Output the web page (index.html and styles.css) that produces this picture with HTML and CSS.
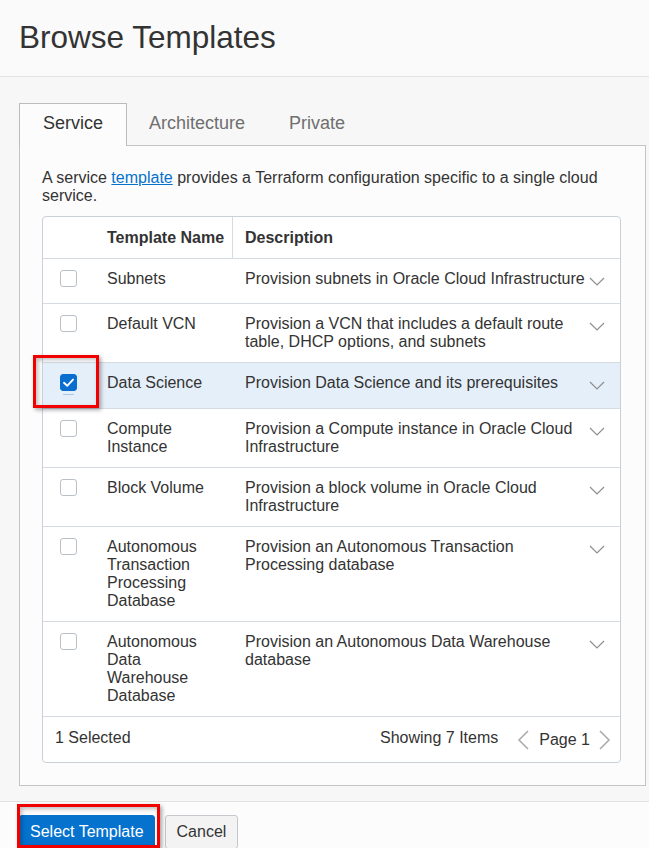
FILE: index.html
```html
<!DOCTYPE html>
<html lang="en">
<head>
<meta charset="utf-8">
<title>Browse Templates</title>
<link rel="stylesheet" href="styles.css">
</head>
<body>
<header class="page-header">
  <h1 class="title">Browse Templates</h1>
</header>
<main class="content">
  <div class="tabs">
    <div class="tab tab-active">Service</div>
    <div class="tab">Architecture</div>
    <div class="tab">Private</div>
  </div>
  <section class="panel">
    <p class="intro">A service <a href="#" class="link">template</a> provides a Terraform configuration specific to a single cloud service.</p>
    <div class="table">
      <div class="row row-head">
        <div class="cell"></div>
        <div class="cell th th-name">Template Name</div>
        <div class="cell th th-desc">Description</div>
        <div class="cell"></div>
      </div>

      <div class="row">
        <div class="cell cell-check"><span class="checkbox"></span></div>
        <div class="cell cell-name">Subnets</div>
        <div class="cell cell-desc">Provision subnets in Oracle Cloud Infrastructure</div>
        <div class="cell cell-chev"><svg class="chev" width="16" height="9" viewBox="0 0 16 9"><polyline points="1,1 8,8 15,1" /></svg></div>
      </div>

      <div class="row">
        <div class="cell cell-check"><span class="checkbox"></span></div>
        <div class="cell cell-name">Default VCN</div>
        <div class="cell cell-desc">Provision a VCN that includes a default route table, DHCP options, and subnets</div>
        <div class="cell cell-chev"><svg class="chev" width="16" height="9" viewBox="0 0 16 9"><polyline points="1,1 8,8 15,1" /></svg></div>
      </div>

      <div class="row row-selected">
        <div class="cell cell-check"><span class="checkbox checkbox-checked"><svg width="17" height="17" viewBox="0 0 17 17"><polyline points="4,8.8 7.2,11.8 13,5.6" /></svg></span></div>
        <div class="cell cell-name">Data Science</div>
        <div class="cell cell-desc">Provision Data Science and its prerequisites</div>
        <div class="cell cell-chev"><svg class="chev" width="16" height="9" viewBox="0 0 16 9"><polyline points="1,1 8,8 15,1" /></svg></div>
      </div>

      <div class="row">
        <div class="cell cell-check"><span class="checkbox"></span></div>
        <div class="cell cell-name">Compute Instance</div>
        <div class="cell cell-desc">Provision a Compute instance in Oracle Cloud Infrastructure</div>
        <div class="cell cell-chev"><svg class="chev" width="16" height="9" viewBox="0 0 16 9"><polyline points="1,1 8,8 15,1" /></svg></div>
      </div>

      <div class="row">
        <div class="cell cell-check"><span class="checkbox"></span></div>
        <div class="cell cell-name">Block Volume</div>
        <div class="cell cell-desc">Provision a block volume in Oracle Cloud Infrastructure</div>
        <div class="cell cell-chev"><svg class="chev" width="16" height="9" viewBox="0 0 16 9"><polyline points="1,1 8,8 15,1" /></svg></div>
      </div>

      <div class="row">
        <div class="cell cell-check"><span class="checkbox"></span></div>
        <div class="cell cell-name">Autonomous Transaction Processing Database</div>
        <div class="cell cell-desc">Provision an Autonomous Transaction Processing database</div>
        <div class="cell cell-chev"><svg class="chev" width="16" height="9" viewBox="0 0 16 9"><polyline points="1,1 8,8 15,1" /></svg></div>
      </div>

      <div class="row">
        <div class="cell cell-check"><span class="checkbox"></span></div>
        <div class="cell cell-name">Autonomous Data Warehouse Database</div>
        <div class="cell cell-desc">Provision an Autonomous Data Warehouse database</div>
        <div class="cell cell-chev"><svg class="chev" width="16" height="9" viewBox="0 0 16 9"><polyline points="1,1 8,8 15,1" /></svg></div>
      </div>

      <div class="table-foot">
        <span class="selected-count">1 Selected</span>
        <span class="showing">Showing 7 Items</span>
        <div class="pager">
          <svg class="pager-arrow" width="12" height="20" viewBox="0 0 12 20"><polyline points="11,1 2,10 11,19" /></svg>
          <span class="page-label">Page 1</span>
          <svg class="pager-arrow" width="12" height="20" viewBox="0 0 12 20"><polyline points="1,1 10,10 1,19" /></svg>
        </div>
      </div>
    </div>
  </section>
</main>
<footer class="actions">
  <button class="btn btn-primary">Select Template</button>
  <button class="btn btn-secondary">Cancel</button>
</footer>
<div class="highlight highlight-check"></div>
<div class="highlight highlight-button"></div>
</body>
</html>
```

FILE: styles.css
```css
* {
  box-sizing: border-box;
}

body {
  margin: 0;
  position: relative;
  background: #f7f7f7;
  color: #333333;
  font-family: "Liberation Sans", Arial, sans-serif;
  font-size: 16px;
  line-height: 18px;
}

.page-header {
  background: #fafafa;
  border-bottom: 1px solid #e3e3e3;
  padding: 19px 19px 21px;
}

.title {
  margin: 0;
  font-size: 31.5px;
  line-height: 36px;
  font-weight: normal;
  color: #333333;
}

.content {
  padding: 26px 3px 0 19px;
}

.tabs {
  display: flex;
  position: relative;
  z-index: 1;
}

.tab {
  font-size: 18px;
  line-height: 20px;
  padding: 9px 21px 13px;
  border: 1px solid transparent;
  border-bottom: none;
  color: #6f6f6f;
  margin-bottom: -1px;
}

.tab-active {
  padding: 9px 23px 13px;
  border-color: #bcbcbc;
  background: #fcfcfc;
  color: #333333;
}

.panel {
  border: 1px solid #c4c4c4;
  background: #fcfcfc;
  padding: 23px 24px 22px 22px;
}

.intro {
  margin: 0 0 11px;
}

.link {
  color: #0572ce;
  text-decoration: underline;
}

.table {
  background: #ffffff;
  border: 1px solid #c9d0d7;
  border-radius: 4px;
  overflow: hidden;
}

.row {
  display: grid;
  grid-template-columns: 52px 138px 1fr 31px;
  border-bottom: 1px solid #d5dbe1;
  min-height: 45px;
}

.row-head {
  min-height: 0;
  height: 42px;
}

.th {
  font-weight: bold;
  white-space: nowrap;
  display: flex;
  align-items: center;
}

.th-name {
  padding-left: 12px;
  border-right: 1px solid #d5dbe1;
}

.th-desc {
  padding-left: 12px;
}

.row-selected {
  background: #e5eff9;
  min-height: 46px;
}

.cell-check {
  padding: 11px 0 0 17px;
}

.cell-name {
  padding: 11px 8px 11px 12px;
}

.cell-desc {
  padding: 11px 0 11px 12px;
}

.cell-chev {
  padding-top: 18px;
}

.chev {
  display: block;
}

.chev polyline {
  fill: none;
  stroke: #8e8e8e;
  stroke-width: 1.2;
}

.checkbox {
  display: block;
  position: relative;
  width: 17px;
  height: 17px;
  border: 1px solid #b9c0c7;
  border-radius: 3px;
  background: #ffffff;
}

.checkbox-checked {
  background: #0a6ed1;
  border-color: #0a6ed1;
}

.checkbox-checked svg {
  display: block;
  margin: -1px;
}

.checkbox-checked polyline {
  fill: none;
  stroke: #ffffff;
  stroke-width: 1.9;
  stroke-linecap: round;
  stroke-linejoin: round;
}

.checkbox-checked::after {
  content: "";
  position: absolute;
  left: 2px;
  right: 2px;
  bottom: -5px;
  height: 1px;
  background: #a9c9ea;
}

.table-foot {
  display: flex;
  align-items: flex-start;
  height: 45px;
  padding: 12px 9px 0 12px;
}

.selected-count {
  flex: 1;
}

.pager {
  display: flex;
  align-items: center;
  margin-top: 1px;
  margin-left: 19px;
}

.pager-arrow {
  display: block;
}

.page-label {
  margin: 0 9px 0 10px;
}

.pager-arrow polyline {
  fill: none;
  stroke: #a9a9a9;
  stroke-width: 1.5;
}

.actions {
  margin-top: 15px;
  border-top: 1px solid #e2e2e2;
  background: #fcfcfc;
  padding: 13px 19px;
  display: flex;
  gap: 10px;
}

.btn {
  font-family: "Liberation Sans", Arial, sans-serif;
  font-size: 16px;
  height: 34px;
  border-radius: 3px;
  padding: 0 10px;
  cursor: pointer;
}

.btn-primary {
  background: #0572ce;
  border: 1px solid #0572ce;
  color: #ffffff;
}

.btn-secondary {
  background: #f3f3f3;
  border: 1px solid #c4c8cc;
  color: #333333;
  padding: 0 11px;
}

.highlight {
  position: absolute;
  border: 3px solid #f20000;
  box-shadow: 2px 2px 4px rgba(0, 0, 0, 0.35), inset 2px 2px 4px rgba(0, 0, 0, 0.25);
  pointer-events: none;
}

.highlight-check {
  left: 33px;
  top: 355px;
  width: 66px;
  height: 53px;
}

.highlight-button {
  left: 17px;
  top: 804px;
  width: 143px;
  height: 44px;
}
```
